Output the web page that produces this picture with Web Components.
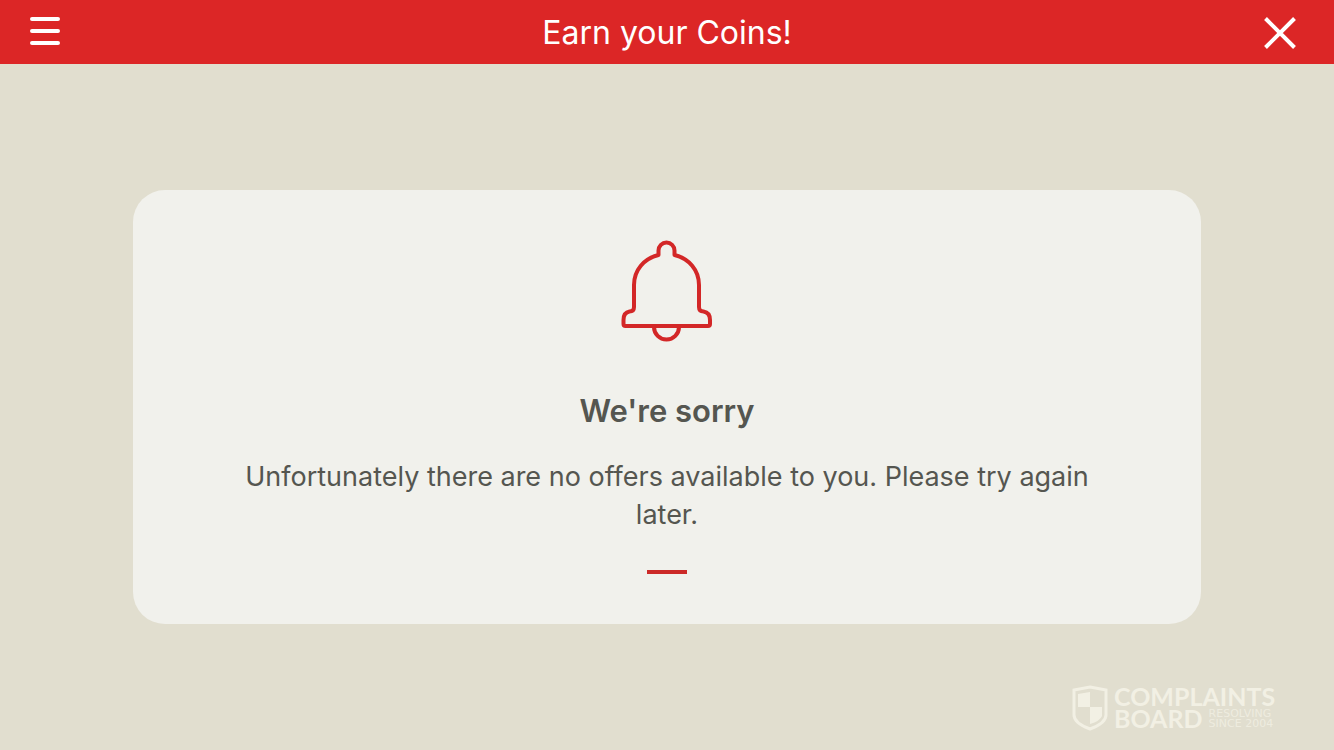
<!DOCTYPE html>
<html lang="en">
<head>
<meta charset="utf-8">
<meta name="viewport" content="width=device-width, initial-scale=1">
<title>Earn your Coins!</title>
<style>
  body { margin: 0; font-family: Inter, "Liberation Sans", sans-serif; color: #555650; background: #e1decf; }
</style>
</head>
<body>
<offers-page>
  <top-bar slot="header">Earn your Coins!</top-bar>
  <notice-card>
    <bell-icon slot="icon"></bell-icon>
    <span slot="heading">We're sorry</span>
    Unfortunately there are no offers available to you. Please try again later.
  </notice-card>
  <board-mark slot="mark"></board-mark>
</offers-page>
<script>
  function define(name, html) {
    const template = document.createElement('template');
    template.innerHTML = html;
    customElements.define(name, class extends HTMLElement {
      constructor() {
        super();
        this.attachShadow({ mode: 'open' }).append(template.content.cloneNode(true));
      }
    });
  }

  define('offers-page', `
    <style>
      :host { display: flex; flex-direction: column; min-height: 100vh; position: relative; }
      main { flex: 1; display: grid; align-items: center; padding: 0 10%; }
      footer { position: absolute; right: 48px; bottom: 19px; }
    </style>
    <slot name="header"></slot>
    <main><slot></slot></main>
    <footer><slot name="mark"></slot></footer>`);

  define('top-bar', `
    <style>
      :host { display: block; background: #dc2626; color: #fff; }
      header { display: grid; grid-template-columns: 64px 1fr 64px; align-items: center; height: 64px; padding: 0 22px 0 14px; }
      h1 { margin: 0; font-size: 32px; line-height: 66px; font-weight: 400; text-align: center; padding-left: 8px; }
      button { border: 0; padding: 0; background: none; color: inherit; height: 64px; display: grid; place-items: center; }
      svg { display: block; fill: none; stroke: currentColor; stroke-width: 4; }
    </style>
    <header>
      <button type="button" aria-label="Menu">
        <svg width="32" height="36" viewBox="0 0 32 36" stroke-linecap="round"><path d="M2 4H28M2 16H28M2 28H28"/></svg>
      </button>
      <h1><slot></slot></h1>
      <button type="button" aria-label="Close">
        <svg width="32" height="32" viewBox="0 0 32 32"><path d="M1.500 1.500L30.500 30.500M30.500 1.500L1.500 30.500"/></svg>
      </button>
    </header>`);

  define('notice-card', `
    <style>
      :host { display: block; background: #f1f1ec; border-radius: 32px; padding: 50px 100px; text-align: center; }
      h2 { margin: 49px 0 27px; font-size: 31px; line-height: 40px; font-weight: 600; }
      p { margin: 0; font-size: 27px; line-height: 38px; }
      hr { width: 40px; height: 4px; margin: 36px auto 0; border: 0; background: #cc2a28; }
    </style>
    <slot name="icon"></slot>
    <h2><slot name="heading"></slot></h2>
    <p><slot></slot></p>
    <hr>`);

  define('bell-icon', `
    <style>
      :host { display: block; }
      svg { display: block; margin: 0 auto; fill: none; stroke: #d32727; stroke-width: 4; stroke-linejoin: round; }
    </style>
    <svg width="92" height="102" viewBox="0 0 92 102" aria-hidden="true">
      <path d="M37.5 15V10.500A8 8 0 0 1 53.500 10.500V15C68 18.500 78 30 78 45V67Q78 71.500 82.500 71.500Q89 72.500 89 80V84Q89 86 87 86H4.500Q2.500 86 2.500 84V80Q2.500 72.500 8.500 71.500Q13 71.500 13 67V45C13 30 23 18.500 37.500 15Z"/>
      <path d="M33 87A12.500 12.500 0 0 0 58 87"/>
    </svg>`);

  define('board-mark', `
    <style>
      :host { display: flex; gap: 6px; color: #f2f0e4; font-family: Lato, "Liberation Sans", sans-serif; font-weight: 700; }
      svg { display: block; }
      .words { display: grid; align-content: start; width: 172px; }
      .name { font-size: 25px; line-height: 22px; }
      .row { display: flex; gap: 6px; align-items: end; }
      small { font-family: "DejaVu Sans", sans-serif; font-size: 11px; line-height: 10px; font-weight: 400; display: grid; white-space: nowrap; opacity: 0.8; }
    </style>
    <svg width="36" height="46" viewBox="0 0 36 46" aria-hidden="true">
      <path d="M18 2L34 5V30Q34 38 18 44Q2 38 2 30V5Z" fill="none" stroke="currentColor" stroke-width="3"/>
      <path d="M18 7V22H6V9ZM18 22H30V31Q28 36 18 39Z" fill="currentColor"/>
    </svg>
    <div class="words">
      <div class="name">COMPLAINTS</div>
      <div class="row"><span class="name">BOARD</span><small><span>RESOLVING</span><span>SINCE 2004</span></small></div>
    </div>`);
</script>
</body>
</html>
